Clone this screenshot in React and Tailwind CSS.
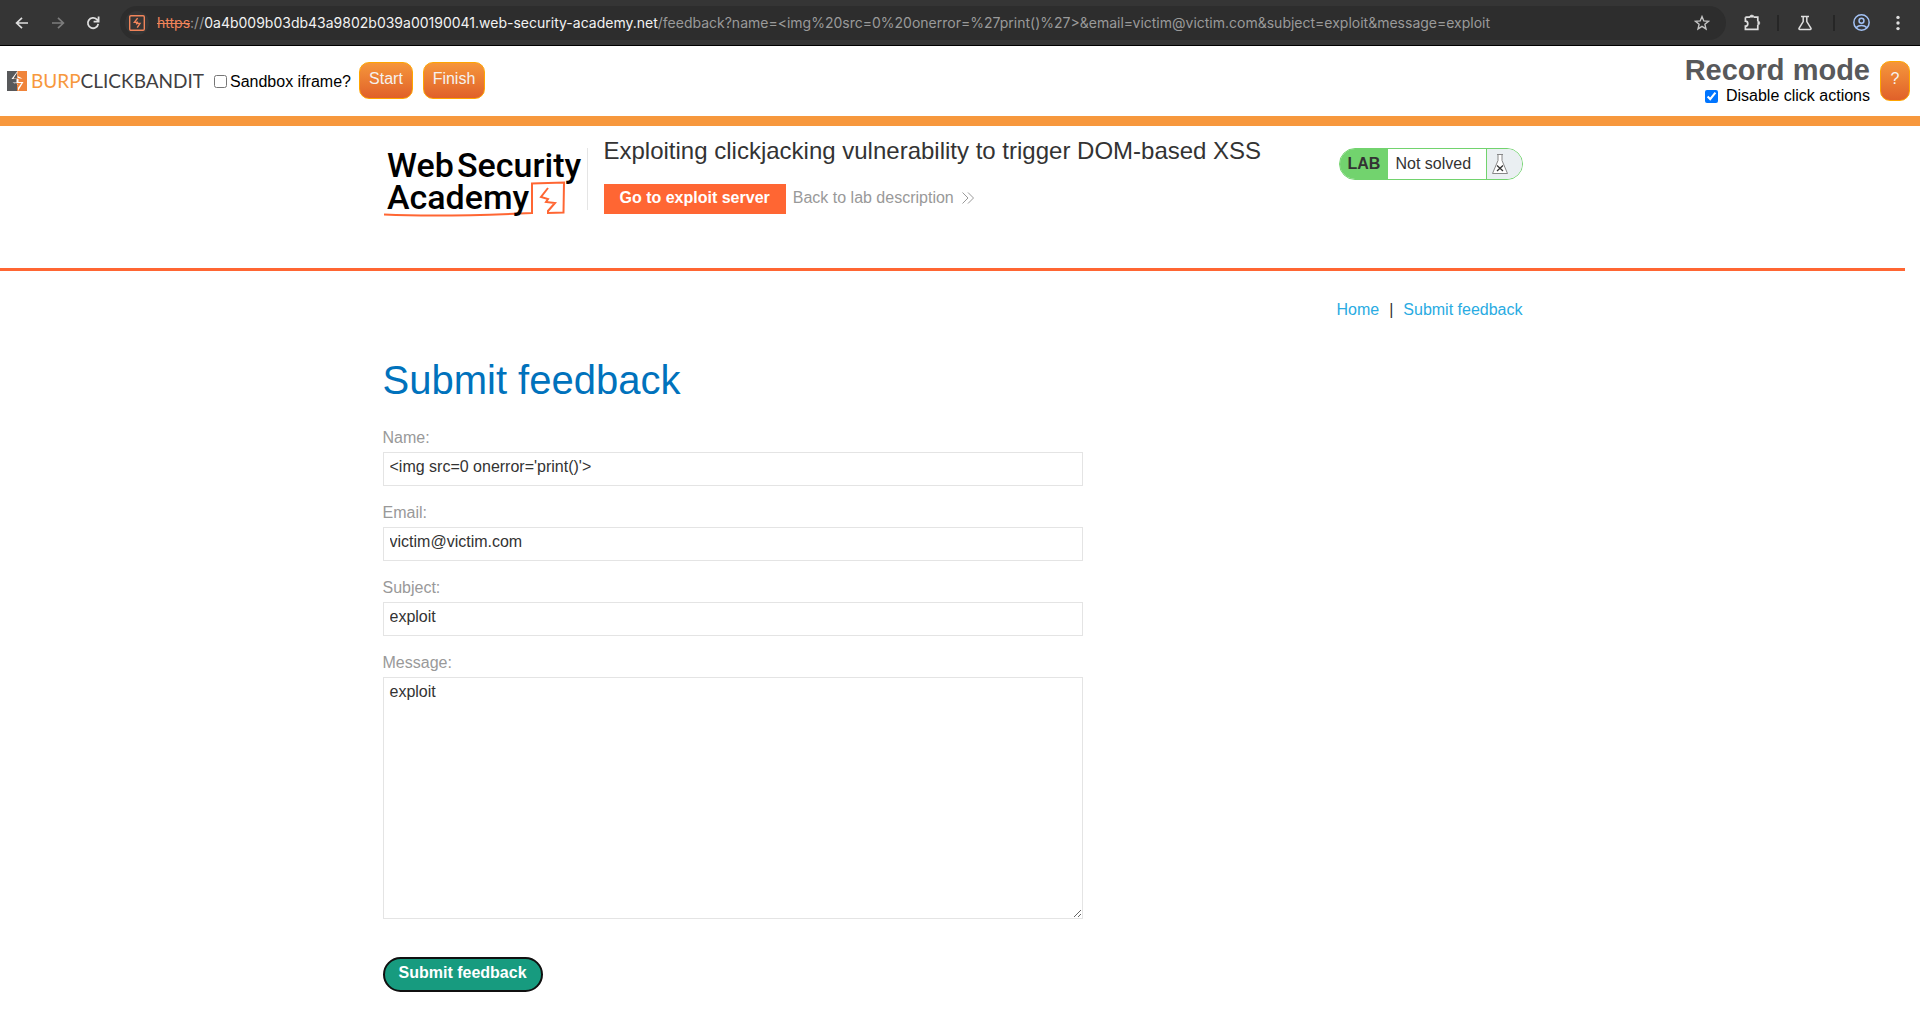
import React from "react";

function BrowserBar() {
  return (
    <header className="flex h-[46px] items-center border-b border-black bg-[#353535] text-[#dedede]">
      <div className="flex w-[120px] shrink-0 items-center gap-5 pl-[13px]">
        <button aria-label="Back" className="flex size-4 items-center justify-center">
          <svg viewBox="0 0 16 16" className="size-4" fill="none" stroke="currentColor" strokeWidth="1.7">
            <path d="M15 8H4M9 2.8 3.6 8 9 13.2" />
          </svg>
        </button>
        <button aria-label="Forward" className="flex size-4 items-center justify-center text-[#7c7c7c]">
          <svg viewBox="0 0 16 16" className="size-4" fill="none" stroke="currentColor" strokeWidth="1.7">
            <path d="M3 8h11M9 2.8 14.4 8 9 13.2" />
          </svg>
        </button>
        <button aria-label="Reload" className="flex size-4 items-center justify-center">
          <svg viewBox="0 0 16 16" className="size-4" fill="none" stroke="currentColor" strokeWidth="1.8">
            <path d="M13.2 8.8A5.2 5.2 0 1 1 11.8 4.4L13.2 6M13.6 1.6v5h-5" />
          </svg>
        </button>
      </div>
      <div className="flex h-[34px] min-w-0 flex-1 items-center rounded-full bg-[#2d2d2d] pr-4 pl-[5px]">
        <div className="flex size-6 shrink-0 items-center justify-center rounded-full bg-[#353535]">
          <svg viewBox="0 0 16 16" className="size-4" fill="none" stroke="#f0845a">
            <rect x="0.7" y="0.7" width="14.6" height="14.6" rx="1.2" strokeWidth="1.4" />
            <path d="M8.6 3.2 5.4 7.4h2.2v2M8.2 12.6 11 8.4H8.4V6.6" strokeWidth="1.4" />
          </svg>
        </div>
        <p className="ml-2 min-w-0 flex-1 truncate font-['Inter',sans-serif] text-sm text-[#9a9a9a]">
          <span className="text-[#f0845a] line-through">https</span>://
          <span className="text-[#f2f2f2]">0a4b009b03db43a9802b039a00190041.web-security-academy.net</span>
          /feedback?name=&lt;img%20src=0%20onerror=%27print()%27&gt;&amp;email=victim@victim.com&amp;subject=exploit&amp;message=exploit
        </p>
        <button aria-label="Bookmark" className="text-[#c4c4c4]">
          <svg viewBox="0 0 16 16" className="size-4" fill="none" stroke="currentColor" strokeWidth="1.4">
            <path d="m8 1.6 1.8 4.3 4.7.4-3.6 3 1.1 4.6L8 11.4l-4 2.5 1.1-4.6-3.6-3 4.7-.4z" />
          </svg>
        </button>
      </div>
      <div className="flex shrink-0 items-center pr-[14px] pl-[18px]">
        <button aria-label="Extensions">
          <svg viewBox="0 0 17 17" className="size-[17px]" fill="none" stroke="currentColor" strokeWidth="1.7">
            <path d="M1.4 3.2H6M10 3.2h3.8v4M13.8 11v4.4H1.4v-3.2c3.2 0 3.2-5 0-5v-4" />
            <path d="M5.6 3.2a2 2 0 0 1 4.4 0zM13.8 7a2 2 0 0 1 0 4z" fill="currentColor" strokeWidth="0.6" />
          </svg>
        </button>
        <span className="mx-4 h-4 w-[2px] bg-[#262626]" />
        <button aria-label="Experiments" className="ml-[2px]">
          <svg viewBox="0 0 16 16" className="size-4" fill="none" stroke="currentColor" strokeWidth="1.5">
            <path d="M4 1.6h8M6.2 1.6v5L2 13.4q-.4 1 .8 1h10.4q1.2 0 .8-1L9.8 6.6v-5" />
          </svg>
        </button>
        <span className="ml-5 h-4 w-[2px] bg-[#262626]" />
        <button aria-label="Profile" className="ml-[18px] text-[#a3c2f5]">
          <svg viewBox="0 0 16 16" className="size-[17px]" fill="none" stroke="currentColor" strokeWidth="1.4">
            <circle cx="8" cy="8" r="7.2" />
            <circle cx="8" cy="6.3" r="2.3" />
            <path d="M3 12.8c2.6-2.6 7.400-2.600 10 0" />
          </svg>
        </button>
        <button aria-label="Menu" className="ml-5">
          <svg viewBox="0 0 16 16" className="size-4" fill="currentColor">
            <circle cx="8" cy="2.4" r="1.7" />
            <circle cx="8" cy="8" r="1.7" />
            <circle cx="8" cy="13.6" r="1.7" />
          </svg>
        </button>
      </div>
    </header>
  );
}

function OrangeButton({ className, children, ...rest }) {
  return (
    <button
      className={
        "rounded-[10px] border border-[#ffa500] bg-linear-to-b from-[#f5963b] to-[#e0602a] text-base text-[#f5f2ef] " + className
      }
      {...rest}
    >
      {children}
    </button>
  );
}

function BurpBar() {
  return (
    <section className="flex h-20 items-start justify-between border-b-10 border-[#f7983d] pl-[7px] text-black">
      <div className="flex items-center pt-4">
        <svg viewBox="0 0 20 20" className="size-5" aria-hidden="true">
          <rect width="10" height="20" fill="#58595b" />
          <rect x="10" width="10" height="20" fill="#f0843a" />
          <path d="M10.5 0 4.5 8h5v3.5H5.5L11 14v6l5.500-9h-5V7.500h4L10.500 5z" fill="#fff" />
          <path d="M10.5 1.5v5l3 1.5h-3v4h4l-4 5.500V13L7.500 12h3V7.500h-4z" fill="#f0843a" />
          <path d="M10 2v5.500H6.500zM10 12.500V17l-2.500-5z" fill="#58595b" />
        </svg>
        <span className="ml-1 w-[173px] font-['Lato',sans-serif] text-[19px] leading-5 whitespace-nowrap text-[#414042]">
          <span className="text-[#f7983d]">BURP</span>CLICKBANDIT
        </span>
        <label className="ml-[10px] flex items-center gap-[3px] pt-[2px] text-base leading-5">
          <input type="checkbox" className="size-[13px]" />
          Sandbox iframe?
        </label>
        <OrangeButton className="ml-2 h-[37px] w-[54px] pb-1">Start</OrangeButton>
        <OrangeButton className="ml-[10px] h-[37px] w-[62px] pb-1">Finish</OrangeButton>
      </div>
      <div className="flex items-start pr-[10px]">
        <div className="flex flex-col items-end pt-2">
          <h2 className="text-[29px] leading-8 font-bold text-[#58595b]">Record mode</h2>
          <label className="flex items-center gap-2 text-base leading-5">
            <input type="checkbox" defaultChecked className="size-[13px]" />
            Disable click actions
          </label>
        </div>
        <OrangeButton className="mt-[15px] ml-[10px] h-10 w-[30px] pb-1" aria-label="Help">?</OrangeButton>
      </div>
    </section>
  );
}

function AcademyLogo() {
  return (
    <svg viewBox="0 0 200 72" className="h-[72px] w-[200px] shrink-0" role="img" aria-label="Web Security Academy">
      <path d="M1 68.500q60 2.500 148-1.500V37.500l32-1-.5 30-15.500.5v-2l7-8-9-1 2-3-7-2 7-9" fill="none" stroke="#ff6633" strokeWidth="2" />
      <g fontFamily="Roboto, sans-serif" fontWeight="500" fontSize="34">
        <text x="4" y="31">Web</text>
        <text x="74" y="31">Security</text>
        <text x="4" y="63">Academy</text>
      </g>
    </svg>
  );
}

function LabStatus() {
  return (
    <div className="flex h-8 w-[184px] shrink-0 overflow-hidden rounded-2xl border border-[#72d36e] leading-[29px]">
      <strong className="w-12 bg-[#72d36e] pl-2">LAB</strong>
      <span className="flex-1 pl-2">Not solved</span>
      <span className="flex w-9 items-center border-l border-[#72d36e] bg-[#eaeff2] pl-1">
        <svg viewBox="0 0 18 22" className="h-[22px] w-[18px]" fill="#fff" stroke="#888" strokeWidth="1" aria-hidden="true">
          <path d="M6 1.5h6M7 1.5v6L1.5 20.5h15L11 7.5v-6" />
          <path d="m6 12.500 6 5.500M12 12.500l-6 5.500" stroke="#333" strokeWidth="1.3" />
        </svg>
      </span>
    </div>
  );
}

function LabHeader() {
  return (
    <section className="mr-[15px] h-[145px] border-b-3 border-[#ff6633]">
      <div className="mx-auto flex max-w-[1140px]">
        <div className="pt-5">
          <AcademyLogo />
        </div>
        <div className="mt-[22px] ml-1 h-[62px] w-px bg-[#e5e5e5]" />
        <div className="ml-4 flex-1 pt-[9px]">
          <h2 className="text-2xl leading-8">Exploiting clickjacking vulnerability to trigger DOM-based XSS</h2>
          <div className="mt-[17px] flex items-start gap-[7px]">
            <a href="#exploit" className="h-[30px] bg-[#ff6633] px-4 leading-7 font-bold text-white">
              Go to exploit server
            </a>
            <a href="#lab" className="flex items-center leading-7 text-[#999]">
              Back to lab description
              <svg viewBox="0 0 12 12" className="ml-2 size-3" fill="none" stroke="#999" aria-hidden="true">
                <path d="m.5.5 5.500 5.500-5.500 5.500M6 .5 11.500 6 6 11.500" />
              </svg>
            </a>
          </div>
        </div>
        <div className="pt-[22px]">
          <LabStatus />
        </div>
      </div>
    </section>
  );
}

const fields = [
  { id: "name", label: "Name:", value: "<img src=0 onerror='print()'>" },
  { id: "email", label: "Email:", value: "victim@victim.com" },
  { id: "subject", label: "Subject:", value: "exploit" },
];

function FeedbackForm() {
  return (
    <form className="flex w-[700px] max-w-full flex-col items-start" onSubmit={(e) => e.preventDefault()}>
      {fields.map((f) => (
        <React.Fragment key={f.id}>
          <label htmlFor={f.id} className="h-6 leading-5 text-[#999]">{f.label}</label>
          <input
            id={f.id}
            defaultValue={f.value}
            className="mb-[17px] h-[34px] w-full border border-[#e4e4e4] px-[6px] pb-1 outline-none"
          />
        </React.Fragment>
      ))}
      <label htmlFor="message" className="h-6 leading-5 text-[#999]">Message:</label>
      <textarea
        id="message"
        defaultValue="exploit"
        className="h-[242px] w-full border border-[#e4e4e4] px-[6px] py-1 leading-5 outline-none"
      />
      <button className="mt-[38px] h-[35px] rounded-full border-2 border-[#101010] bg-[#179b7f] px-[14px] pb-1 font-bold text-white">
        Submit feedback
      </button>
    </form>
  );
}

export default function App() {
  return (
    <div className="min-h-screen bg-white font-['Liberation_Sans',Arial,sans-serif] text-base text-[#333]">
      <BrowserBar />
      <BurpBar />
      <LabHeader />
      <main className="mr-[15px]">
        <div className="mx-auto max-w-[1140px] pt-[29px]">
          <nav className="flex justify-end gap-[10px] leading-5">
            <a href="#home" className="text-[#29abe2]">Home</a>
            <span>|</span>
            <a href="#feedback" className="text-[#29abe2]">Submit feedback</a>
          </nav>
          <h1 className="mt-9 mb-6 text-[40px] leading-12 text-[#0072bc]">Submit feedback</h1>
          <FeedbackForm />
        </div>
      </main>
    </div>
  );
}
